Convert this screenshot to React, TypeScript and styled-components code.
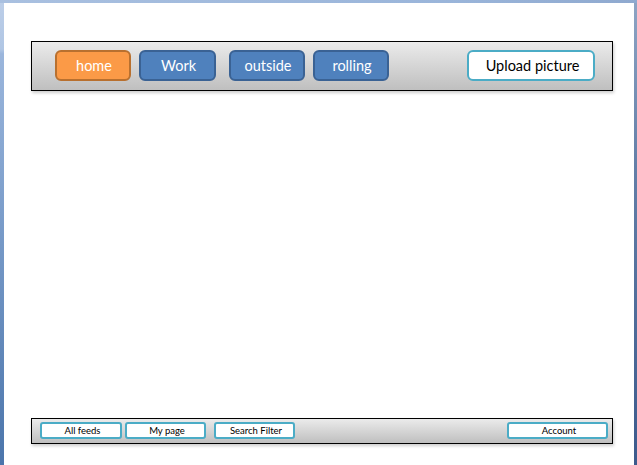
import React from "react";
import styled, { createGlobalStyle } from "styled-components";

const Global = createGlobalStyle`
  html, body { margin: 0; padding: 0; width: 637px; height: 465px; overflow: hidden; background: #fff; }
`;

const Frame = styled.div`
  box-sizing: border-box;
  width: 637px;
  height: 465px;
  padding-top: 3px;
  background: linear-gradient(90deg, #a9c0e0 0%, #9ab5da 70%, #8fa9cf 100%);
  font-family: "Lato", "Liberation Sans", sans-serif;
`;

const Window = styled.div`
  display: flex;
  height: 462px;
  background: linear-gradient(180deg, #bccee8 0%, #b0c6e4 10%, #9bb6dc 11%, #7c9ecb 45%, #4b75ab 100%);
`;

const RightEdge = styled.div`
  width: 3px;
  background: linear-gradient(180deg, #8ea4c4 0%, #647fa8 35%, #3c5a8c 100%);
`;

const Page = styled.main`
  box-sizing: border-box;
  margin-left: 4px;
  width: 630px;
  height: 462px;
  background: #fff;
  padding: 38px 21px 21px 27px;
  display: flex;
  flex-direction: column;
  justify-content: space-between;
`;

const Bar = styled.nav<{ $small?: boolean }>`
  box-sizing: border-box;
  width: 582px;
  height: ${(p) => (p.$small ? "26px" : "50px")};
  border: 1px solid #000;
  background: linear-gradient(180deg, #ebebeb 0%, #bfbfbf 100%);
  box-shadow: 1px 2px 3px rgba(0, 0, 0, 0.2);
  display: flex;
  align-items: center;
  padding: ${(p) => (p.$small ? "0 4px 1px 8px" : "0 17px 1px 23px")};
`;

const Tab = styled.button<{ $w: number; $tone: "orange" | "blue"; $gap: number }>`
  box-sizing: border-box;
  width: ${(p) => p.$w}px;
  height: 31px;
  margin-right: ${(p) => p.$gap}px;
  padding: 0 0 0 2px;
  border-radius: 6px;
  border: 2px solid ${(p) => (p.$tone === "orange" ? "#b8702f" : "#3a6294")};
  background: ${(p) => (p.$tone === "orange" ? "#fb9a47" : "#4f81bd")};
  color: #fff;
  font: 400 14.5px "Lato", "Liberation Sans", sans-serif;
`;

const Upload = styled.button`
  box-sizing: border-box;
  width: 128px;
  height: 31px;
  margin-left: auto;
  padding: 0 0 0 3px;
  border-radius: 6px;
  border: 2px solid #4bacc6;
  background: #fff;
  color: #000;
  font: 400 14.5px "Lato", "Liberation Sans", sans-serif;
`;

const SmallButton = styled.button<{ $w: number; $gap?: number; $right?: boolean }>`
  box-sizing: border-box;
  width: ${(p) => p.$w}px;
  height: 17px;
  margin-right: ${(p) => p.$gap ?? 0}px;
  margin-left: ${(p) => (p.$right ? "auto" : "0")};
  padding: 0 0 0 3px;
  border-radius: 3px;
  border: 2px solid #4bacc6;
  background: #fff;
  color: #000;
  font: 400 9.5px "Lato", "Liberation Sans", sans-serif;
`;

export default function App() {
  return (
    <Frame>
      <Global />
      <Window>
        <Page>
          <Bar>
            <Tab $w={76} $tone="orange" $gap={8}>home</Tab>
            <Tab $w={77} $tone="blue" $gap={13}>Work</Tab>
            <Tab $w={76} $tone="blue" $gap={8}>outside</Tab>
            <Tab $w={76} $tone="blue" $gap={0}>rolling</Tab>
            <Upload>Upload picture</Upload>
          </Bar>
          <Bar $small>
            <SmallButton $w={82} $gap={3}>All feeds</SmallButton>
            <SmallButton $w={81} $gap={8}>My page</SmallButton>
            <SmallButton $w={81}>Search Filter</SmallButton>
            <SmallButton $w={101} $right>Account</SmallButton>
          </Bar>
        </Page>
        <RightEdge />
      </Window>
    </Frame>
  );
}
